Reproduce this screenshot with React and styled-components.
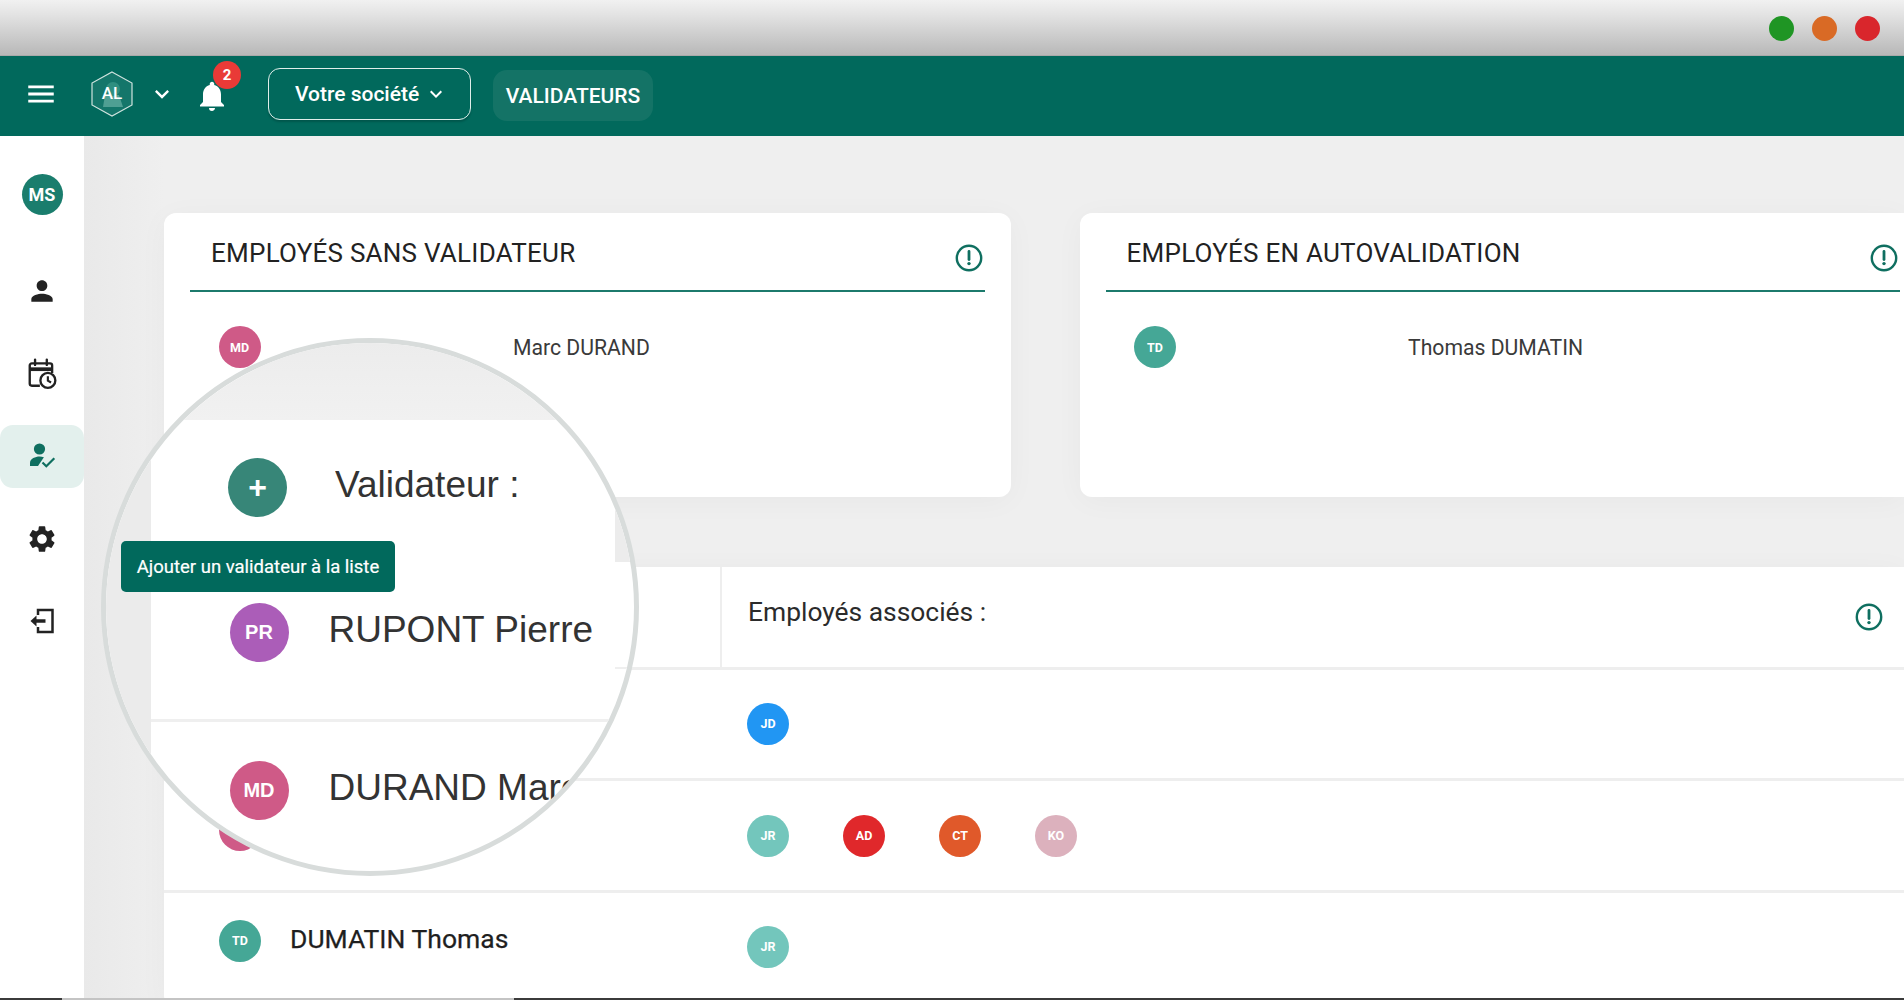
import React from 'react';
import styled, { createGlobalStyle } from 'styled-components';
import { MdMenu, MdKeyboardArrowDown, MdNotifications, MdPerson, MdSettings } from 'react-icons/md';

const Global = createGlobalStyle`
  html, body { margin: 0; padding: 0; background: #fff; }
  * { box-sizing: border-box; }
`;

const Root = styled.div`
  position: relative; width: 1904px; height: 1000px; overflow: hidden;
  display: flex; flex-direction: column;
  font-family: Roboto, "Liberation Sans", sans-serif; color: #2b2b2b;
`;
const TitleBar = styled.div`
  height: 56px; flex: none; display: flex; justify-content: flex-end; align-items: center;
  gap: 18px; padding: 1px 24px 0 0;
  background: linear-gradient(#f1f1f1, #e4e4e4 25%, #b9b9b9 98%);
  border-bottom: 1px solid #a9a9a9;
`;
const Light = styled.span`
  width: 25px; height: 25px; border-radius: 50%; background: ${p => p.$c};
`;
const Header = styled.header`
  height: 80px; flex: none; display: flex; align-items: center; background: #01695c;
  padding: 0 0 5px 24px; color: #fff;
`;
const MenuBtn = styled.span`display: flex; margin-right: 33px;`;
const LogoWrap = styled.span`display: flex; margin-right: 15px;`;
const Chevron = styled.span`display: flex; margin-right: 18px;`;
const BellWrap = styled.span`position: relative; display: flex; margin: 4px 38px 0 0;`;
const Badge = styled.span`
  position: absolute; left: 19px; top: -17px; width: 28px; height: 28px; border-radius: 50%;
  background: #e93a37; color: #fff; font-size: 15px; font-weight: 700;
  display: flex; align-items: center; justify-content: center;
`;
const CompanyBtn = styled.div`
  width: 203px; height: 52px; border: 1.5px solid #dfeeea; border-radius: 12px;
  display: flex; align-items: center; padding-left: 26px; gap: 5px;
  font-size: 21px; font-weight: 500; box-shadow: 0 2px 2px rgba(0,0,0,.18);
  margin-right: 22px;
`;
const PagePill = styled.div`
  width: 160px; height: 51px; border-radius: 14px; background: #147366;
  display: flex; align-items: center; justify-content: center;
  font-size: 21px; font-weight: 500; margin-top: 4px;
`;
const Body = styled.div`flex: 1; min-height: 0; display: flex;`;
const Sidebar = styled.nav`
  width: 84px; flex: none; background: #fff; padding-top: 38px;
  display: flex; flex-direction: column; align-items: center;
`;
const MeAvatar = styled.div`
  width: 41px; height: 41px; border-radius: 50%; background: #1a7d6d; color: #fff;
  font-weight: 700; font-size: 18px; display: flex; align-items: center; justify-content: center;
  margin-bottom: 45px;
`;
const NavList = styled.div`display: flex; flex-direction: column; gap: 20px; width: 100%;`;
const NavItem = styled.div`
  height: 62.5px; border-radius: 13px; display: flex; align-items: center; justify-content: center;
  background: ${p => (p.$active ? '#e3f0ed' : 'transparent')};
  color: ${p => (p.$active ? '#0f6f60' : '#222')};
`;
const Main = styled.main`
  flex: 1; min-width: 0; padding: 77px 0 0 80px; overflow: hidden;
  background: linear-gradient(90deg, #e9e9e9, #efefef 80px);
`;
const CardRow = styled.div`display: flex; gap: 68.5px; height: 284px;`;
const Card = styled.section`
  width: ${p => p.$w || 'auto'}; flex: ${p => (p.$w ? 'none' : 1)};
  background: #fff; border-radius: ${p => (p.$w ? '12px' : '12px 0 0 12px')};
  padding: 0 ${p => p.$pr} 0 26px; box-shadow: 0 4px 30px rgba(0,0,0,.035);
`;
const CardHead = styled.div`
  height: 79px; border-bottom: 2px solid #1c7a6c; display: flex; justify-content: space-between;
  padding: 20px 2px 0 21px;
`;
const CardTitle = styled.h2`
  margin: 0; font-size: 26px; font-weight: 400; line-height: 40px; letter-spacing: .25px; color: #222;
`;
const InfoWrap = styled.span`display: flex; margin-top: ${p => p.$t}px;`;
const CardPerson = styled.div`
  display: flex; align-items: center; gap: ${p => p.$gap}px; padding: 34px 0 0 28.5px;
`;
const Avatar = styled.span`
  width: 42px; height: 42px; flex: none; border-radius: 50%; background: ${p => p.$c}; color: #fff;
  font-weight: 700; font-size: 12.5px; display: flex; align-items: center; justify-content: center;
`;
const PersonName = styled.span`font-size: 21.2px; color: #3a3a3a;`;
const TableCard = styled.section`
  margin-top: 70px; background: #fff; border-radius: 12px 0 0 12px; height: 440px;
  box-shadow: 0 4px 30px rgba(0,0,0,.035);
`;
const TableHead = styled.div`
  height: 102.5px; display: grid; grid-template-columns: 558px 1fr; border-bottom: 3px solid #eee;
`;
const HeadLeft = styled.div`
  border-right: 2px solid #eee; padding: 24px 0 0 55px; font-size: 24px; font-weight: 500;
`;
const HeadRight = styled.div`
  display: flex; justify-content: space-between; padding: 24px 21px 0 26px;
`;
const HeadLabel = styled.span`font-size: 26.4px; line-height: 42px; color: #2b2b2b;`;
const TableRow = styled.div`
  height: ${p => p.$h}px; display: grid; grid-template-columns: 557px 1fr;
  border-bottom: ${p => (p.$last ? 'none' : '3px solid #eee')};
`;
const NameCell = styled.div`
  display: flex; align-items: center; gap: 29px; padding: 0 0 12px 55px;
`;
const RowName = styled.span`
  font-size: 26.5px; font-weight: 400; line-height: 30px; color: #1f1f1f; margin-top: -4px;
  -webkit-text-stroke: .25px #1f1f1f;
`;
const LinkedCell = styled.div`display: flex; align-items: center; gap: 54px; padding-left: 26px;`;
const BottomStrip = styled.div`
  height: 2px; flex: none;
  background: linear-gradient(90deg, #3b3b3b 62px, #c4c4c4 62px, #c4c4c4 514px, #3b3b3b 514px);
`;
const Lens = styled.div`
  position: absolute; left: 101px; top: 338px; width: 538px; height: 538px; border-radius: 50%;
  border: 5px solid #d8dcdb; background: #fff; overflow: hidden; display: flex;
`;
const LensBand = styled.div`width: 45px; flex: none; background: #ebebeb;`;
const LensPanel = styled.div`flex: 1; display: flex; flex-direction: column;`;
const LensTop = styled.div`height: 77px; flex: none; background: linear-gradient(#ececec, #f1f1f1);`;
const LensRow = styled.div`
  height: ${p => p.$h}px; flex: none; display: flex; align-items: flex-start;
  gap: ${p => p.$gap}px; padding: ${p => p.$pt}px 0 0 ${p => p.$pl}px;
  border-bottom: ${p => (p.$line ? '3px solid #efefef' : 'none')};
`;
const LensAvatar = styled.span`
  width: 59px; height: 59px; flex: none; border-radius: 50%; background: ${p => p.$c}; color: #fff;
  font-family: "Liberation Sans", sans-serif; font-weight: ${p => (p.$plus ? 700 : 700)};
  font-size: ${p => (p.$plus ? '32px' : '20px')};
  display: flex; align-items: center; justify-content: center;
`;
const LensText = styled.span`
  font-family: "Liberation Sans", sans-serif; font-size: 37px; line-height: 50px; color: #333;
  white-space: nowrap; max-width: ${p => p.$max || 'none'}; overflow: hidden; margin-top: 2px;
`;
const LensGap = styled.div`
  position: absolute; left: 509px; top: 157px; width: 30px; height: 62px; background: #ececec;
`;
const LensRule = styled.div`
  position: absolute; left: ${p => p.$l}px; top: ${p => p.$t}px; width: 60px; height: 2px; background: #efefef;
`;
const Tooltip = styled.div`
  position: absolute; left: 121px; top: 541px; width: 274px; height: 51px; border-radius: 5px;
  background: #01695c; color: #fff; font-size: 18.5px; -webkit-text-stroke: .2px #fff;
  display: flex; align-items: center; justify-content: center;
`;

const Info = () => (
  <svg width="28" height="28" viewBox="0 0 28 28" fill="none">
    <circle cx="14" cy="14" r="12.2" stroke="#0f6f60" strokeWidth="2.4" />
    <path d="M14 7.500v8" stroke="#0f6f60" strokeWidth="2.8" strokeLinecap="round" />
    <circle cx="14" cy="19.6" r="1.7" fill="#0f6f60" />
  </svg>
);

const Logo = () => (
  <svg width="42" height="46" viewBox="0 0 42 46">
    <path d="M21 1 L41 12 V34 L21 45 L1 34 V12 Z" fill="#14766a" stroke="#cfe3de" strokeWidth="1.2" />
    <path d="M14 24 L28 24 L32 36 L12 36 Z" fill="#4f9f93" />
    <circle cx="22" cy="18" r="7" fill="#2f8f80" />
    <text x="21" y="28" textAnchor="middle" fill="#fff" fontSize="17" fontWeight="500" fontFamily="Roboto, sans-serif">AL</text>
  </svg>
);

const CalendarClock = () => (
  <svg width="32" height="32" viewBox="0 0 30 30" fill="none" stroke="#222" strokeWidth="2.2">
    <path d="M13 26H5.500A2 2 0 0 1 3.500 24V7a2 2 0 0 1 2-2h17a2 2 0 0 1 2 2v7" />
    <path d="M3.500 10.500h21" strokeWidth="3.500" />
    <path d="M8.500 1.500v5M19.500 1.500v5" strokeLinecap="round" />
    <circle cx="20.500" cy="21" r="7" fill="#fff" />
    <path d="M20.500 17v4.300l3 1.700" strokeWidth="2" />
  </svg>
);

const PersonCheck = () => (
  <svg width="30" height="30" viewBox="0 0 30 30" fill="currentColor">
    <circle cx="12.500" cy="8" r="5.600" />
    <path d="M3 25v-3.500c0-3.800 5.500-6 9.500-6 1.500 0 3 .3 4.400.8L11 25Z" />
    <path d="M15.500 21.500l3.800 3.700 8-8" fill="none" stroke="currentColor" strokeWidth="2.200" />
  </svg>
);

const Logout = () => (
  <svg width="30" height="30" viewBox="0 0 30 30" fill="none" stroke="#222" strokeWidth="2.500">
    <path d="M11 9V4h14.500v22H11v-5" />
    <path d="M18.500 15H8" strokeWidth="3.500" />
    <path d="M9.500 9.500 3.500 15l6 5.500Z" fill="#222" stroke="none" />
  </svg>
);

export default function App() {
  return (
    <Root>
      <Global />
      <TitleBar>
        <Light $c="#1f9524" />
        <Light $c="#d96a25" />
        <Light $c="#d9262c" />
      </TitleBar>
      <Header>
        <MenuBtn><MdMenu size={34} /></MenuBtn>
        <LogoWrap><Logo /></LogoWrap>
        <Chevron><MdKeyboardArrowDown size={28} /></Chevron>
        <BellWrap>
          <MdNotifications size={36} />
          <Badge>2</Badge>
        </BellWrap>
        <CompanyBtn>Votre société <MdKeyboardArrowDown size={24} /></CompanyBtn>
        <PagePill>VALIDATEURS</PagePill>
      </Header>
      <Body>
        <Sidebar>
          <MeAvatar>MS</MeAvatar>
          <NavList>
            <NavItem><MdPerson size={32} /></NavItem>
            <NavItem><CalendarClock /></NavItem>
            <NavItem $active><PersonCheck /></NavItem>
            <NavItem><MdSettings size={32} /></NavItem>
            <NavItem><Logout /></NavItem>
          </NavList>
        </Sidebar>
        <Main>
          <CardRow>
            <Card $w="847px" $pr="26px">
              <CardHead>
                <CardTitle>EMPLOYÉS SANS VALIDATEUR</CardTitle>
                <InfoWrap $t={11}><Info /></InfoWrap>
              </CardHead>
              <CardPerson $gap={252.5}>
                <Avatar $c="#cf5a87">MD</Avatar>
                <PersonName>Marc DURAND</PersonName>
              </CardPerson>
            </Card>
            <Card $pr="4px">
              <CardHead>
                <CardTitle>EMPLOYÉS EN AUTOVALIDATION</CardTitle>
                <InfoWrap $t={11}><Info /></InfoWrap>
              </CardHead>
              <CardPerson $gap={232}>
                <Avatar $c="#45a796">TD</Avatar>
                <PersonName>Thomas DUMATIN</PersonName>
              </CardPerson>
            </Card>
          </CardRow>
          <TableCard>
            <TableHead>
              <HeadLeft>Validateur :</HeadLeft>
              <HeadRight>
                <HeadLabel>Employés associés :</HeadLabel>
                <InfoWrap $t={12}><Info /></InfoWrap>
              </HeadRight>
            </TableHead>
            <TableRow $h={111.5}>
              <NameCell><Avatar $c="#ab5db8">PR</Avatar><RowName>RUPONT Pierre</RowName></NameCell>
              <LinkedCell><Avatar $c="#2196f3">JD</Avatar></LinkedCell>
            </TableRow>
            <TableRow $h={112}>
              <NameCell><Avatar $c="#cf5a87">MD</Avatar><RowName>DURAND Marc</RowName></NameCell>
              <LinkedCell>
                <Avatar $c="#73c6bc">JR</Avatar>
                <Avatar $c="#e0282b">AD</Avatar>
                <Avatar $c="#e0592a">CT</Avatar>
                <Avatar $c="#dcb1bd">KO</Avatar>
              </LinkedCell>
            </TableRow>
            <TableRow $h={107} $last>
              <NameCell><Avatar $c="#45a796">TD</Avatar><RowName>DUMATIN Thomas</RowName></NameCell>
              <LinkedCell><Avatar $c="#73c6bc">JR</Avatar></LinkedCell>
            </TableRow>
          </TableCard>
        </Main>
      </Body>
      <BottomStrip />
      <Lens>
        <LensBand />
        <LensPanel>
          <LensTop />
          <LensRow $h={144} $gap={48} $pt={38} $pl={77}>
            <LensAvatar $c="#378678" $plus>+</LensAvatar>
            <LensText>Validateur :</LensText>
          </LensRow>
          <LensRow $h={158} $gap={40} $pt={39} $pl={78.5} $line>
            <LensAvatar $c="#ab5db8">PR</LensAvatar>
            <LensText>RUPONT Pierre</LensText>
          </LensRow>
          <LensRow $h={150} $gap={40} $pt={39} $pl={78.5}>
            <LensAvatar $c="#cf5a87">MD</LensAvatar>
            <LensText $max="250px">DURAND Marc</LensText>
          </LensRow>
        </LensPanel>
        <LensGap />
        <LensRule $l={509} $t={324} />
        <LensRule $l={469} $t={435} />
      </Lens>
      <Tooltip>Ajouter un validateur à la liste</Tooltip>
    </Root>
  );
}
